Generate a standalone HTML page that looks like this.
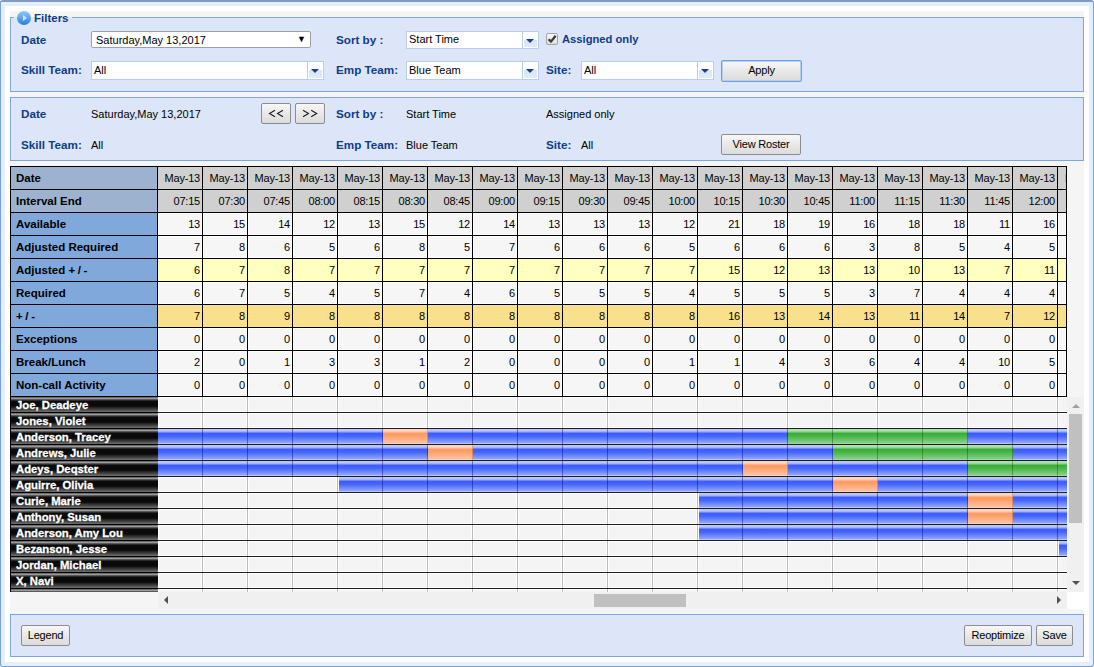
<!DOCTYPE html>
<html><head><meta charset="utf-8"><style>
*{box-sizing:border-box;margin:0;padding:0}
html,body{width:1094px;height:667px;overflow:hidden;background:#fff}
body{position:relative;font-family:"Liberation Sans",sans-serif;font-size:11px;color:#000}
.a{position:absolute}
.t{position:absolute;white-space:nowrap;line-height:12px}
.lb{font-weight:bold;color:#0f3c88;font-size:11.7px}
.combo{position:absolute;background:#fff;border:1px solid #b8cde6}
.combo .btn{position:absolute;right:0;top:0;bottom:0;width:16px;border-left:1px solid #b8cde6;background:linear-gradient(#fff 0,#fff 50%,#d6e5f8 50%,#e2ecfa 100%);box-shadow:inset 0 0 0 1px #fff}
.combo .btn:after{content:"";position:absolute;left:3px;top:6.5px;border-left:4px solid transparent;border-right:4px solid transparent;border-top:4.5px solid #1e3d8c}
.button{position:absolute;border:1px solid #8c8c8c;border-radius:2px;background:linear-gradient(#f8f8f8,#e8e8e8 50%,#dcdcdc);text-align:center;font-size:11px;color:#000;letter-spacing:-0.2px}
</style></head><body>

<div class="a" style="left:0;top:0;width:1094px;height:667px;border:1px solid #78a0d4;border-top-color:#8898b8;border-radius:3px;background:#e4eefc"></div>
<div class="a" style="left:0;top:1px;width:1094px;height:1px;background:#78a0d4"></div>
<div class="a" style="left:5px;top:6px;width:1084px;height:656px;background:#fff"></div>
<div class="a" style="left:10px;top:11px;width:1074px;height:646px;background:#f5f5f5"></div>
<div class="a" style="left:10px;top:17px;width:1074px;height:75px;border:1px solid #7ea6d8;background:#dce6f8"></div>
<div class="a" style="left:14px;top:17px;width:58px;height:1px;background:#dce6f8"></div>
<div class="a" style="left:17.3px;top:10.8px;width:14.2px;height:14px;border-radius:50%;background:linear-gradient(#94ccf8,#5aa6ec 50%,#2a7cd6)"></div>
<div class="a" style="left:23px;top:15px;width:0;height:0;border-top:3px solid transparent;border-bottom:3px solid transparent;border-left:4px solid rgba(225,235,250,0.85)"></div>
<div class="t lb" style="left:34px;top:12px;font-size:11.5px">Filters</div>
<div class="t lb" style="left:21px;top:34px">Date</div>
<div class="a" style="left:91px;top:31px;width:220px;height:17px;border:1px solid #a0a0a0;border-radius:2px;background:#fff"></div>
<div class="t" style="left:96px;top:34px">Saturday,May 13,2017</div>
<div class="t" style="left:297px;top:33px;font-size:9px">&#9660;</div>
<div class="t lb" style="left:21px;top:64px">Skill Team:</div>
<div class="combo" style="left:91px;top:61px;width:233px;height:19px"><div class="btn"></div></div>
<div class="t" style="left:94px;top:64px">All</div>
<div class="t lb" style="left:336px;top:34px">Sort by :</div>
<div class="combo" style="left:406px;top:31px;width:133px;height:18px"><div class="btn"></div></div>
<div class="t" style="left:409px;top:33px">Start Time</div>
<div class="t lb" style="left:336px;top:64px">Emp Team:</div>
<div class="combo" style="left:406px;top:61px;width:133px;height:19px"><div class="btn"></div></div>
<div class="t" style="left:409px;top:64px">Blue Team</div>
<div class="a" style="left:546px;top:33px;width:12px;height:12px;border:1px solid #a4a4a4;border-radius:2px;background:linear-gradient(#f6f6f6,#e0e0e0)"></div>
<svg class="a" style="left:546px;top:33px" width="12" height="12"><path d="M2.6 6.2 L5 8.6 L9.6 2.8" stroke="#3a3a3a" stroke-width="2.3" fill="none" stroke-linejoin="round"/></svg>
<div class="t lb" style="left:562px;top:33px;font-size:11.2px">Assigned only</div>
<div class="t lb" style="left:546px;top:64px">Site:</div>
<div class="combo" style="left:581px;top:61px;width:133px;height:19px"><div class="btn"></div></div>
<div class="t" style="left:584px;top:64px">All</div>
<div class="button" style="left:721px;top:60px;width:81px;height:22px;border-color:#6f9fdc;box-shadow:inset 0 0 0 1px #b4d0f0;line-height:19px">Apply</div>
<div class="a" style="left:10px;top:97px;width:1074px;height:64px;border:1px solid #7ea6d8;background:#dce6f8"></div>
<div class="t lb" style="left:21px;top:108px">Date</div>
<div class="t" style="left:91px;top:108px">Saturday,May 13,2017</div>
<div class="button" style="left:261px;top:103px;width:30px;height:21px"></div>
<div class="button" style="left:295px;top:103px;width:30px;height:21px"></div>
<svg class="a" style="left:261px;top:103px" width="64" height="21"><g stroke="#1a1a2a" stroke-width="1.1" fill="none"><path d="M14 7.3 L8.5 10.5 L14 13.7"/><path d="M22 7.3 L16.5 10.5 L22 13.7"/><path d="M42 7.3 L47.5 10.5 L42 13.7"/><path d="M50.2 7.3 L55.7 10.5 L50.2 13.7"/></g></svg>
<div class="t lb" style="left:336px;top:108px">Sort by :</div>
<div class="t" style="left:406px;top:108px">Start Time</div>
<div class="t" style="left:546px;top:108px">Assigned only</div>
<div class="t lb" style="left:21px;top:139px">Skill Team:</div>
<div class="t" style="left:91px;top:139px">All</div>
<div class="t lb" style="left:336px;top:139px">Emp Team:</div>
<div class="t" style="left:406px;top:139px">Blue Team</div>
<div class="t lb" style="left:546px;top:139px">Site:</div>
<div class="t" style="left:581px;top:139px">All</div>
<div class="button" style="left:721px;top:134px;width:80px;height:21px;line-height:19px">View Roster</div>
<div class="a" style="left:10px;top:166px;width:1057px;height:231px;background:#000"></div>
<div class="a" style="left:11px;top:167px;width:146px;height:22px;background:#9cb2ce"></div>
<div class="t" style="left:16px;top:172px;font-weight:bold;font-size:11.5px">Date</div>
<div class="a" style="left:158px;top:167px;width:44px;height:22px;background:#d0d0d0"></div>
<div class="t" style="left:158px;top:172px;width:44px;text-align:right;padding-right:2px;letter-spacing:-0.2px">May-13</div>
<div class="a" style="left:203px;top:167px;width:44px;height:22px;background:#d0d0d0"></div>
<div class="t" style="left:203px;top:172px;width:44px;text-align:right;padding-right:2px;letter-spacing:-0.2px">May-13</div>
<div class="a" style="left:248px;top:167px;width:44px;height:22px;background:#d0d0d0"></div>
<div class="t" style="left:248px;top:172px;width:44px;text-align:right;padding-right:2px;letter-spacing:-0.2px">May-13</div>
<div class="a" style="left:293px;top:167px;width:44px;height:22px;background:#d0d0d0"></div>
<div class="t" style="left:293px;top:172px;width:44px;text-align:right;padding-right:2px;letter-spacing:-0.2px">May-13</div>
<div class="a" style="left:338px;top:167px;width:44px;height:22px;background:#d0d0d0"></div>
<div class="t" style="left:338px;top:172px;width:44px;text-align:right;padding-right:2px;letter-spacing:-0.2px">May-13</div>
<div class="a" style="left:383px;top:167px;width:44px;height:22px;background:#d0d0d0"></div>
<div class="t" style="left:383px;top:172px;width:44px;text-align:right;padding-right:2px;letter-spacing:-0.2px">May-13</div>
<div class="a" style="left:428px;top:167px;width:44px;height:22px;background:#d0d0d0"></div>
<div class="t" style="left:428px;top:172px;width:44px;text-align:right;padding-right:2px;letter-spacing:-0.2px">May-13</div>
<div class="a" style="left:473px;top:167px;width:44px;height:22px;background:#d0d0d0"></div>
<div class="t" style="left:473px;top:172px;width:44px;text-align:right;padding-right:2px;letter-spacing:-0.2px">May-13</div>
<div class="a" style="left:518px;top:167px;width:44px;height:22px;background:#d0d0d0"></div>
<div class="t" style="left:518px;top:172px;width:44px;text-align:right;padding-right:2px;letter-spacing:-0.2px">May-13</div>
<div class="a" style="left:563px;top:167px;width:44px;height:22px;background:#d0d0d0"></div>
<div class="t" style="left:563px;top:172px;width:44px;text-align:right;padding-right:2px;letter-spacing:-0.2px">May-13</div>
<div class="a" style="left:608px;top:167px;width:44px;height:22px;background:#d0d0d0"></div>
<div class="t" style="left:608px;top:172px;width:44px;text-align:right;padding-right:2px;letter-spacing:-0.2px">May-13</div>
<div class="a" style="left:653px;top:167px;width:44px;height:22px;background:#d0d0d0"></div>
<div class="t" style="left:653px;top:172px;width:44px;text-align:right;padding-right:2px;letter-spacing:-0.2px">May-13</div>
<div class="a" style="left:698px;top:167px;width:44px;height:22px;background:#d0d0d0"></div>
<div class="t" style="left:698px;top:172px;width:44px;text-align:right;padding-right:2px;letter-spacing:-0.2px">May-13</div>
<div class="a" style="left:743px;top:167px;width:44px;height:22px;background:#d0d0d0"></div>
<div class="t" style="left:743px;top:172px;width:44px;text-align:right;padding-right:2px;letter-spacing:-0.2px">May-13</div>
<div class="a" style="left:788px;top:167px;width:44px;height:22px;background:#d0d0d0"></div>
<div class="t" style="left:788px;top:172px;width:44px;text-align:right;padding-right:2px;letter-spacing:-0.2px">May-13</div>
<div class="a" style="left:833px;top:167px;width:44px;height:22px;background:#d0d0d0"></div>
<div class="t" style="left:833px;top:172px;width:44px;text-align:right;padding-right:2px;letter-spacing:-0.2px">May-13</div>
<div class="a" style="left:878px;top:167px;width:44px;height:22px;background:#d0d0d0"></div>
<div class="t" style="left:878px;top:172px;width:44px;text-align:right;padding-right:2px;letter-spacing:-0.2px">May-13</div>
<div class="a" style="left:923px;top:167px;width:44px;height:22px;background:#d0d0d0"></div>
<div class="t" style="left:923px;top:172px;width:44px;text-align:right;padding-right:2px;letter-spacing:-0.2px">May-13</div>
<div class="a" style="left:968px;top:167px;width:44px;height:22px;background:#d0d0d0"></div>
<div class="t" style="left:968px;top:172px;width:44px;text-align:right;padding-right:2px;letter-spacing:-0.2px">May-13</div>
<div class="a" style="left:1013px;top:167px;width:44px;height:22px;background:#d0d0d0"></div>
<div class="t" style="left:1013px;top:172px;width:44px;text-align:right;padding-right:2px;letter-spacing:-0.2px">May-13</div>
<div class="a" style="left:1058px;top:167px;width:8px;height:22px;background:#d0d0d0"></div>
<div class="a" style="left:1058px;top:167px;width:8px;height:22px;overflow:hidden"><div class="t" style="left:7px;top:5px">May-13</div></div>
<div class="a" style="left:11px;top:190px;width:146px;height:22px;background:#9cb2ce"></div>
<div class="t" style="left:16px;top:195px;font-weight:bold;font-size:11.5px">Interval End</div>
<div class="a" style="left:158px;top:190px;width:44px;height:22px;background:#d0d0d0"></div>
<div class="t" style="left:158px;top:195px;width:44px;text-align:right;padding-right:2px;letter-spacing:-0.2px">07:15</div>
<div class="a" style="left:203px;top:190px;width:44px;height:22px;background:#d0d0d0"></div>
<div class="t" style="left:203px;top:195px;width:44px;text-align:right;padding-right:2px;letter-spacing:-0.2px">07:30</div>
<div class="a" style="left:248px;top:190px;width:44px;height:22px;background:#d0d0d0"></div>
<div class="t" style="left:248px;top:195px;width:44px;text-align:right;padding-right:2px;letter-spacing:-0.2px">07:45</div>
<div class="a" style="left:293px;top:190px;width:44px;height:22px;background:#d0d0d0"></div>
<div class="t" style="left:293px;top:195px;width:44px;text-align:right;padding-right:2px;letter-spacing:-0.2px">08:00</div>
<div class="a" style="left:338px;top:190px;width:44px;height:22px;background:#d0d0d0"></div>
<div class="t" style="left:338px;top:195px;width:44px;text-align:right;padding-right:2px;letter-spacing:-0.2px">08:15</div>
<div class="a" style="left:383px;top:190px;width:44px;height:22px;background:#d0d0d0"></div>
<div class="t" style="left:383px;top:195px;width:44px;text-align:right;padding-right:2px;letter-spacing:-0.2px">08:30</div>
<div class="a" style="left:428px;top:190px;width:44px;height:22px;background:#d0d0d0"></div>
<div class="t" style="left:428px;top:195px;width:44px;text-align:right;padding-right:2px;letter-spacing:-0.2px">08:45</div>
<div class="a" style="left:473px;top:190px;width:44px;height:22px;background:#d0d0d0"></div>
<div class="t" style="left:473px;top:195px;width:44px;text-align:right;padding-right:2px;letter-spacing:-0.2px">09:00</div>
<div class="a" style="left:518px;top:190px;width:44px;height:22px;background:#d0d0d0"></div>
<div class="t" style="left:518px;top:195px;width:44px;text-align:right;padding-right:2px;letter-spacing:-0.2px">09:15</div>
<div class="a" style="left:563px;top:190px;width:44px;height:22px;background:#d0d0d0"></div>
<div class="t" style="left:563px;top:195px;width:44px;text-align:right;padding-right:2px;letter-spacing:-0.2px">09:30</div>
<div class="a" style="left:608px;top:190px;width:44px;height:22px;background:#d0d0d0"></div>
<div class="t" style="left:608px;top:195px;width:44px;text-align:right;padding-right:2px;letter-spacing:-0.2px">09:45</div>
<div class="a" style="left:653px;top:190px;width:44px;height:22px;background:#d0d0d0"></div>
<div class="t" style="left:653px;top:195px;width:44px;text-align:right;padding-right:2px;letter-spacing:-0.2px">10:00</div>
<div class="a" style="left:698px;top:190px;width:44px;height:22px;background:#d0d0d0"></div>
<div class="t" style="left:698px;top:195px;width:44px;text-align:right;padding-right:2px;letter-spacing:-0.2px">10:15</div>
<div class="a" style="left:743px;top:190px;width:44px;height:22px;background:#d0d0d0"></div>
<div class="t" style="left:743px;top:195px;width:44px;text-align:right;padding-right:2px;letter-spacing:-0.2px">10:30</div>
<div class="a" style="left:788px;top:190px;width:44px;height:22px;background:#d0d0d0"></div>
<div class="t" style="left:788px;top:195px;width:44px;text-align:right;padding-right:2px;letter-spacing:-0.2px">10:45</div>
<div class="a" style="left:833px;top:190px;width:44px;height:22px;background:#d0d0d0"></div>
<div class="t" style="left:833px;top:195px;width:44px;text-align:right;padding-right:2px;letter-spacing:-0.2px">11:00</div>
<div class="a" style="left:878px;top:190px;width:44px;height:22px;background:#d0d0d0"></div>
<div class="t" style="left:878px;top:195px;width:44px;text-align:right;padding-right:2px;letter-spacing:-0.2px">11:15</div>
<div class="a" style="left:923px;top:190px;width:44px;height:22px;background:#d0d0d0"></div>
<div class="t" style="left:923px;top:195px;width:44px;text-align:right;padding-right:2px;letter-spacing:-0.2px">11:30</div>
<div class="a" style="left:968px;top:190px;width:44px;height:22px;background:#d0d0d0"></div>
<div class="t" style="left:968px;top:195px;width:44px;text-align:right;padding-right:2px;letter-spacing:-0.2px">11:45</div>
<div class="a" style="left:1013px;top:190px;width:44px;height:22px;background:#d0d0d0"></div>
<div class="t" style="left:1013px;top:195px;width:44px;text-align:right;padding-right:2px;letter-spacing:-0.2px">12:00</div>
<div class="a" style="left:1058px;top:190px;width:8px;height:22px;background:#d0d0d0"></div>
<div class="a" style="left:11px;top:213px;width:146px;height:22px;background:#80a8da"></div>
<div class="t" style="left:16px;top:218px;font-weight:bold;font-size:11.5px">Available</div>
<div class="a" style="left:158px;top:213px;width:44px;height:22px;background:#f6f6f6;border:1px solid #fff"></div>
<div class="t" style="left:158px;top:218px;width:44px;text-align:right;padding-right:2px;letter-spacing:-0.2px">13</div>
<div class="a" style="left:203px;top:213px;width:44px;height:22px;background:#f6f6f6;border:1px solid #fff"></div>
<div class="t" style="left:203px;top:218px;width:44px;text-align:right;padding-right:2px;letter-spacing:-0.2px">15</div>
<div class="a" style="left:248px;top:213px;width:44px;height:22px;background:#f6f6f6;border:1px solid #fff"></div>
<div class="t" style="left:248px;top:218px;width:44px;text-align:right;padding-right:2px;letter-spacing:-0.2px">14</div>
<div class="a" style="left:293px;top:213px;width:44px;height:22px;background:#f6f6f6;border:1px solid #fff"></div>
<div class="t" style="left:293px;top:218px;width:44px;text-align:right;padding-right:2px;letter-spacing:-0.2px">12</div>
<div class="a" style="left:338px;top:213px;width:44px;height:22px;background:#f6f6f6;border:1px solid #fff"></div>
<div class="t" style="left:338px;top:218px;width:44px;text-align:right;padding-right:2px;letter-spacing:-0.2px">13</div>
<div class="a" style="left:383px;top:213px;width:44px;height:22px;background:#f6f6f6;border:1px solid #fff"></div>
<div class="t" style="left:383px;top:218px;width:44px;text-align:right;padding-right:2px;letter-spacing:-0.2px">15</div>
<div class="a" style="left:428px;top:213px;width:44px;height:22px;background:#f6f6f6;border:1px solid #fff"></div>
<div class="t" style="left:428px;top:218px;width:44px;text-align:right;padding-right:2px;letter-spacing:-0.2px">12</div>
<div class="a" style="left:473px;top:213px;width:44px;height:22px;background:#f6f6f6;border:1px solid #fff"></div>
<div class="t" style="left:473px;top:218px;width:44px;text-align:right;padding-right:2px;letter-spacing:-0.2px">14</div>
<div class="a" style="left:518px;top:213px;width:44px;height:22px;background:#f6f6f6;border:1px solid #fff"></div>
<div class="t" style="left:518px;top:218px;width:44px;text-align:right;padding-right:2px;letter-spacing:-0.2px">13</div>
<div class="a" style="left:563px;top:213px;width:44px;height:22px;background:#f6f6f6;border:1px solid #fff"></div>
<div class="t" style="left:563px;top:218px;width:44px;text-align:right;padding-right:2px;letter-spacing:-0.2px">13</div>
<div class="a" style="left:608px;top:213px;width:44px;height:22px;background:#f6f6f6;border:1px solid #fff"></div>
<div class="t" style="left:608px;top:218px;width:44px;text-align:right;padding-right:2px;letter-spacing:-0.2px">13</div>
<div class="a" style="left:653px;top:213px;width:44px;height:22px;background:#f6f6f6;border:1px solid #fff"></div>
<div class="t" style="left:653px;top:218px;width:44px;text-align:right;padding-right:2px;letter-spacing:-0.2px">12</div>
<div class="a" style="left:698px;top:213px;width:44px;height:22px;background:#f6f6f6;border:1px solid #fff"></div>
<div class="t" style="left:698px;top:218px;width:44px;text-align:right;padding-right:2px;letter-spacing:-0.2px">21</div>
<div class="a" style="left:743px;top:213px;width:44px;height:22px;background:#f6f6f6;border:1px solid #fff"></div>
<div class="t" style="left:743px;top:218px;width:44px;text-align:right;padding-right:2px;letter-spacing:-0.2px">18</div>
<div class="a" style="left:788px;top:213px;width:44px;height:22px;background:#f6f6f6;border:1px solid #fff"></div>
<div class="t" style="left:788px;top:218px;width:44px;text-align:right;padding-right:2px;letter-spacing:-0.2px">19</div>
<div class="a" style="left:833px;top:213px;width:44px;height:22px;background:#f6f6f6;border:1px solid #fff"></div>
<div class="t" style="left:833px;top:218px;width:44px;text-align:right;padding-right:2px;letter-spacing:-0.2px">16</div>
<div class="a" style="left:878px;top:213px;width:44px;height:22px;background:#f6f6f6;border:1px solid #fff"></div>
<div class="t" style="left:878px;top:218px;width:44px;text-align:right;padding-right:2px;letter-spacing:-0.2px">18</div>
<div class="a" style="left:923px;top:213px;width:44px;height:22px;background:#f6f6f6;border:1px solid #fff"></div>
<div class="t" style="left:923px;top:218px;width:44px;text-align:right;padding-right:2px;letter-spacing:-0.2px">18</div>
<div class="a" style="left:968px;top:213px;width:44px;height:22px;background:#f6f6f6;border:1px solid #fff"></div>
<div class="t" style="left:968px;top:218px;width:44px;text-align:right;padding-right:2px;letter-spacing:-0.2px">11</div>
<div class="a" style="left:1013px;top:213px;width:44px;height:22px;background:#f6f6f6;border:1px solid #fff"></div>
<div class="t" style="left:1013px;top:218px;width:44px;text-align:right;padding-right:2px;letter-spacing:-0.2px">16</div>
<div class="a" style="left:1058px;top:213px;width:8px;height:22px;background:#f6f6f6;border:1px solid #fff"></div>
<div class="a" style="left:11px;top:236px;width:146px;height:22px;background:#80a8da"></div>
<div class="t" style="left:16px;top:241px;font-weight:bold;font-size:11.5px">Adjusted Required</div>
<div class="a" style="left:158px;top:236px;width:44px;height:22px;background:#f6f6f6;border:1px solid #fff"></div>
<div class="t" style="left:158px;top:241px;width:44px;text-align:right;padding-right:2px;letter-spacing:-0.2px">7</div>
<div class="a" style="left:203px;top:236px;width:44px;height:22px;background:#f6f6f6;border:1px solid #fff"></div>
<div class="t" style="left:203px;top:241px;width:44px;text-align:right;padding-right:2px;letter-spacing:-0.2px">8</div>
<div class="a" style="left:248px;top:236px;width:44px;height:22px;background:#f6f6f6;border:1px solid #fff"></div>
<div class="t" style="left:248px;top:241px;width:44px;text-align:right;padding-right:2px;letter-spacing:-0.2px">6</div>
<div class="a" style="left:293px;top:236px;width:44px;height:22px;background:#f6f6f6;border:1px solid #fff"></div>
<div class="t" style="left:293px;top:241px;width:44px;text-align:right;padding-right:2px;letter-spacing:-0.2px">5</div>
<div class="a" style="left:338px;top:236px;width:44px;height:22px;background:#f6f6f6;border:1px solid #fff"></div>
<div class="t" style="left:338px;top:241px;width:44px;text-align:right;padding-right:2px;letter-spacing:-0.2px">6</div>
<div class="a" style="left:383px;top:236px;width:44px;height:22px;background:#f6f6f6;border:1px solid #fff"></div>
<div class="t" style="left:383px;top:241px;width:44px;text-align:right;padding-right:2px;letter-spacing:-0.2px">8</div>
<div class="a" style="left:428px;top:236px;width:44px;height:22px;background:#f6f6f6;border:1px solid #fff"></div>
<div class="t" style="left:428px;top:241px;width:44px;text-align:right;padding-right:2px;letter-spacing:-0.2px">5</div>
<div class="a" style="left:473px;top:236px;width:44px;height:22px;background:#f6f6f6;border:1px solid #fff"></div>
<div class="t" style="left:473px;top:241px;width:44px;text-align:right;padding-right:2px;letter-spacing:-0.2px">7</div>
<div class="a" style="left:518px;top:236px;width:44px;height:22px;background:#f6f6f6;border:1px solid #fff"></div>
<div class="t" style="left:518px;top:241px;width:44px;text-align:right;padding-right:2px;letter-spacing:-0.2px">6</div>
<div class="a" style="left:563px;top:236px;width:44px;height:22px;background:#f6f6f6;border:1px solid #fff"></div>
<div class="t" style="left:563px;top:241px;width:44px;text-align:right;padding-right:2px;letter-spacing:-0.2px">6</div>
<div class="a" style="left:608px;top:236px;width:44px;height:22px;background:#f6f6f6;border:1px solid #fff"></div>
<div class="t" style="left:608px;top:241px;width:44px;text-align:right;padding-right:2px;letter-spacing:-0.2px">6</div>
<div class="a" style="left:653px;top:236px;width:44px;height:22px;background:#f6f6f6;border:1px solid #fff"></div>
<div class="t" style="left:653px;top:241px;width:44px;text-align:right;padding-right:2px;letter-spacing:-0.2px">5</div>
<div class="a" style="left:698px;top:236px;width:44px;height:22px;background:#f6f6f6;border:1px solid #fff"></div>
<div class="t" style="left:698px;top:241px;width:44px;text-align:right;padding-right:2px;letter-spacing:-0.2px">6</div>
<div class="a" style="left:743px;top:236px;width:44px;height:22px;background:#f6f6f6;border:1px solid #fff"></div>
<div class="t" style="left:743px;top:241px;width:44px;text-align:right;padding-right:2px;letter-spacing:-0.2px">6</div>
<div class="a" style="left:788px;top:236px;width:44px;height:22px;background:#f6f6f6;border:1px solid #fff"></div>
<div class="t" style="left:788px;top:241px;width:44px;text-align:right;padding-right:2px;letter-spacing:-0.2px">6</div>
<div class="a" style="left:833px;top:236px;width:44px;height:22px;background:#f6f6f6;border:1px solid #fff"></div>
<div class="t" style="left:833px;top:241px;width:44px;text-align:right;padding-right:2px;letter-spacing:-0.2px">3</div>
<div class="a" style="left:878px;top:236px;width:44px;height:22px;background:#f6f6f6;border:1px solid #fff"></div>
<div class="t" style="left:878px;top:241px;width:44px;text-align:right;padding-right:2px;letter-spacing:-0.2px">8</div>
<div class="a" style="left:923px;top:236px;width:44px;height:22px;background:#f6f6f6;border:1px solid #fff"></div>
<div class="t" style="left:923px;top:241px;width:44px;text-align:right;padding-right:2px;letter-spacing:-0.2px">5</div>
<div class="a" style="left:968px;top:236px;width:44px;height:22px;background:#f6f6f6;border:1px solid #fff"></div>
<div class="t" style="left:968px;top:241px;width:44px;text-align:right;padding-right:2px;letter-spacing:-0.2px">4</div>
<div class="a" style="left:1013px;top:236px;width:44px;height:22px;background:#f6f6f6;border:1px solid #fff"></div>
<div class="t" style="left:1013px;top:241px;width:44px;text-align:right;padding-right:2px;letter-spacing:-0.2px">5</div>
<div class="a" style="left:1058px;top:236px;width:8px;height:22px;background:#f6f6f6;border:1px solid #fff"></div>
<div class="a" style="left:11px;top:259px;width:146px;height:22px;background:#80a8da"></div>
<div class="t" style="left:16px;top:264px;font-weight:bold;font-size:11.5px">Adjusted <span style="letter-spacing:2.6px">+/</span>-</div>
<div class="a" style="left:158px;top:259px;width:44px;height:22px;background:#ffffc0"></div>
<div class="t" style="left:158px;top:264px;width:44px;text-align:right;padding-right:2px;letter-spacing:-0.2px">6</div>
<div class="a" style="left:203px;top:259px;width:44px;height:22px;background:#ffffc0"></div>
<div class="t" style="left:203px;top:264px;width:44px;text-align:right;padding-right:2px;letter-spacing:-0.2px">7</div>
<div class="a" style="left:248px;top:259px;width:44px;height:22px;background:#ffffc0"></div>
<div class="t" style="left:248px;top:264px;width:44px;text-align:right;padding-right:2px;letter-spacing:-0.2px">8</div>
<div class="a" style="left:293px;top:259px;width:44px;height:22px;background:#ffffc0"></div>
<div class="t" style="left:293px;top:264px;width:44px;text-align:right;padding-right:2px;letter-spacing:-0.2px">7</div>
<div class="a" style="left:338px;top:259px;width:44px;height:22px;background:#ffffc0"></div>
<div class="t" style="left:338px;top:264px;width:44px;text-align:right;padding-right:2px;letter-spacing:-0.2px">7</div>
<div class="a" style="left:383px;top:259px;width:44px;height:22px;background:#ffffc0"></div>
<div class="t" style="left:383px;top:264px;width:44px;text-align:right;padding-right:2px;letter-spacing:-0.2px">7</div>
<div class="a" style="left:428px;top:259px;width:44px;height:22px;background:#ffffc0"></div>
<div class="t" style="left:428px;top:264px;width:44px;text-align:right;padding-right:2px;letter-spacing:-0.2px">7</div>
<div class="a" style="left:473px;top:259px;width:44px;height:22px;background:#ffffc0"></div>
<div class="t" style="left:473px;top:264px;width:44px;text-align:right;padding-right:2px;letter-spacing:-0.2px">7</div>
<div class="a" style="left:518px;top:259px;width:44px;height:22px;background:#ffffc0"></div>
<div class="t" style="left:518px;top:264px;width:44px;text-align:right;padding-right:2px;letter-spacing:-0.2px">7</div>
<div class="a" style="left:563px;top:259px;width:44px;height:22px;background:#ffffc0"></div>
<div class="t" style="left:563px;top:264px;width:44px;text-align:right;padding-right:2px;letter-spacing:-0.2px">7</div>
<div class="a" style="left:608px;top:259px;width:44px;height:22px;background:#ffffc0"></div>
<div class="t" style="left:608px;top:264px;width:44px;text-align:right;padding-right:2px;letter-spacing:-0.2px">7</div>
<div class="a" style="left:653px;top:259px;width:44px;height:22px;background:#ffffc0"></div>
<div class="t" style="left:653px;top:264px;width:44px;text-align:right;padding-right:2px;letter-spacing:-0.2px">7</div>
<div class="a" style="left:698px;top:259px;width:44px;height:22px;background:#ffffc0"></div>
<div class="t" style="left:698px;top:264px;width:44px;text-align:right;padding-right:2px;letter-spacing:-0.2px">15</div>
<div class="a" style="left:743px;top:259px;width:44px;height:22px;background:#ffffc0"></div>
<div class="t" style="left:743px;top:264px;width:44px;text-align:right;padding-right:2px;letter-spacing:-0.2px">12</div>
<div class="a" style="left:788px;top:259px;width:44px;height:22px;background:#ffffc0"></div>
<div class="t" style="left:788px;top:264px;width:44px;text-align:right;padding-right:2px;letter-spacing:-0.2px">13</div>
<div class="a" style="left:833px;top:259px;width:44px;height:22px;background:#ffffc0"></div>
<div class="t" style="left:833px;top:264px;width:44px;text-align:right;padding-right:2px;letter-spacing:-0.2px">13</div>
<div class="a" style="left:878px;top:259px;width:44px;height:22px;background:#ffffc0"></div>
<div class="t" style="left:878px;top:264px;width:44px;text-align:right;padding-right:2px;letter-spacing:-0.2px">10</div>
<div class="a" style="left:923px;top:259px;width:44px;height:22px;background:#ffffc0"></div>
<div class="t" style="left:923px;top:264px;width:44px;text-align:right;padding-right:2px;letter-spacing:-0.2px">13</div>
<div class="a" style="left:968px;top:259px;width:44px;height:22px;background:#ffffc0"></div>
<div class="t" style="left:968px;top:264px;width:44px;text-align:right;padding-right:2px;letter-spacing:-0.2px">7</div>
<div class="a" style="left:1013px;top:259px;width:44px;height:22px;background:#ffffc0"></div>
<div class="t" style="left:1013px;top:264px;width:44px;text-align:right;padding-right:2px;letter-spacing:-0.2px">11</div>
<div class="a" style="left:1058px;top:259px;width:8px;height:22px;background:#ffffc0"></div>
<div class="a" style="left:11px;top:282px;width:146px;height:22px;background:#80a8da"></div>
<div class="t" style="left:16px;top:287px;font-weight:bold;font-size:11.5px">Required</div>
<div class="a" style="left:158px;top:282px;width:44px;height:22px;background:#f6f6f6;border:1px solid #fff"></div>
<div class="t" style="left:158px;top:287px;width:44px;text-align:right;padding-right:2px;letter-spacing:-0.2px">6</div>
<div class="a" style="left:203px;top:282px;width:44px;height:22px;background:#f6f6f6;border:1px solid #fff"></div>
<div class="t" style="left:203px;top:287px;width:44px;text-align:right;padding-right:2px;letter-spacing:-0.2px">7</div>
<div class="a" style="left:248px;top:282px;width:44px;height:22px;background:#f6f6f6;border:1px solid #fff"></div>
<div class="t" style="left:248px;top:287px;width:44px;text-align:right;padding-right:2px;letter-spacing:-0.2px">5</div>
<div class="a" style="left:293px;top:282px;width:44px;height:22px;background:#f6f6f6;border:1px solid #fff"></div>
<div class="t" style="left:293px;top:287px;width:44px;text-align:right;padding-right:2px;letter-spacing:-0.2px">4</div>
<div class="a" style="left:338px;top:282px;width:44px;height:22px;background:#f6f6f6;border:1px solid #fff"></div>
<div class="t" style="left:338px;top:287px;width:44px;text-align:right;padding-right:2px;letter-spacing:-0.2px">5</div>
<div class="a" style="left:383px;top:282px;width:44px;height:22px;background:#f6f6f6;border:1px solid #fff"></div>
<div class="t" style="left:383px;top:287px;width:44px;text-align:right;padding-right:2px;letter-spacing:-0.2px">7</div>
<div class="a" style="left:428px;top:282px;width:44px;height:22px;background:#f6f6f6;border:1px solid #fff"></div>
<div class="t" style="left:428px;top:287px;width:44px;text-align:right;padding-right:2px;letter-spacing:-0.2px">4</div>
<div class="a" style="left:473px;top:282px;width:44px;height:22px;background:#f6f6f6;border:1px solid #fff"></div>
<div class="t" style="left:473px;top:287px;width:44px;text-align:right;padding-right:2px;letter-spacing:-0.2px">6</div>
<div class="a" style="left:518px;top:282px;width:44px;height:22px;background:#f6f6f6;border:1px solid #fff"></div>
<div class="t" style="left:518px;top:287px;width:44px;text-align:right;padding-right:2px;letter-spacing:-0.2px">5</div>
<div class="a" style="left:563px;top:282px;width:44px;height:22px;background:#f6f6f6;border:1px solid #fff"></div>
<div class="t" style="left:563px;top:287px;width:44px;text-align:right;padding-right:2px;letter-spacing:-0.2px">5</div>
<div class="a" style="left:608px;top:282px;width:44px;height:22px;background:#f6f6f6;border:1px solid #fff"></div>
<div class="t" style="left:608px;top:287px;width:44px;text-align:right;padding-right:2px;letter-spacing:-0.2px">5</div>
<div class="a" style="left:653px;top:282px;width:44px;height:22px;background:#f6f6f6;border:1px solid #fff"></div>
<div class="t" style="left:653px;top:287px;width:44px;text-align:right;padding-right:2px;letter-spacing:-0.2px">4</div>
<div class="a" style="left:698px;top:282px;width:44px;height:22px;background:#f6f6f6;border:1px solid #fff"></div>
<div class="t" style="left:698px;top:287px;width:44px;text-align:right;padding-right:2px;letter-spacing:-0.2px">5</div>
<div class="a" style="left:743px;top:282px;width:44px;height:22px;background:#f6f6f6;border:1px solid #fff"></div>
<div class="t" style="left:743px;top:287px;width:44px;text-align:right;padding-right:2px;letter-spacing:-0.2px">5</div>
<div class="a" style="left:788px;top:282px;width:44px;height:22px;background:#f6f6f6;border:1px solid #fff"></div>
<div class="t" style="left:788px;top:287px;width:44px;text-align:right;padding-right:2px;letter-spacing:-0.2px">5</div>
<div class="a" style="left:833px;top:282px;width:44px;height:22px;background:#f6f6f6;border:1px solid #fff"></div>
<div class="t" style="left:833px;top:287px;width:44px;text-align:right;padding-right:2px;letter-spacing:-0.2px">3</div>
<div class="a" style="left:878px;top:282px;width:44px;height:22px;background:#f6f6f6;border:1px solid #fff"></div>
<div class="t" style="left:878px;top:287px;width:44px;text-align:right;padding-right:2px;letter-spacing:-0.2px">7</div>
<div class="a" style="left:923px;top:282px;width:44px;height:22px;background:#f6f6f6;border:1px solid #fff"></div>
<div class="t" style="left:923px;top:287px;width:44px;text-align:right;padding-right:2px;letter-spacing:-0.2px">4</div>
<div class="a" style="left:968px;top:282px;width:44px;height:22px;background:#f6f6f6;border:1px solid #fff"></div>
<div class="t" style="left:968px;top:287px;width:44px;text-align:right;padding-right:2px;letter-spacing:-0.2px">4</div>
<div class="a" style="left:1013px;top:282px;width:44px;height:22px;background:#f6f6f6;border:1px solid #fff"></div>
<div class="t" style="left:1013px;top:287px;width:44px;text-align:right;padding-right:2px;letter-spacing:-0.2px">4</div>
<div class="a" style="left:1058px;top:282px;width:8px;height:22px;background:#f6f6f6;border:1px solid #fff"></div>
<div class="a" style="left:11px;top:305px;width:146px;height:22px;background:#80a8da"></div>
<div class="t" style="left:16px;top:310px;font-weight:bold;font-size:11.5px"><span style="letter-spacing:2.6px">+/</span>-</div>
<div class="a" style="left:158px;top:305px;width:44px;height:22px;background:#f8e08c"></div>
<div class="t" style="left:158px;top:310px;width:44px;text-align:right;padding-right:2px;letter-spacing:-0.2px">7</div>
<div class="a" style="left:203px;top:305px;width:44px;height:22px;background:#f8e08c"></div>
<div class="t" style="left:203px;top:310px;width:44px;text-align:right;padding-right:2px;letter-spacing:-0.2px">8</div>
<div class="a" style="left:248px;top:305px;width:44px;height:22px;background:#f8e08c"></div>
<div class="t" style="left:248px;top:310px;width:44px;text-align:right;padding-right:2px;letter-spacing:-0.2px">9</div>
<div class="a" style="left:293px;top:305px;width:44px;height:22px;background:#f8e08c"></div>
<div class="t" style="left:293px;top:310px;width:44px;text-align:right;padding-right:2px;letter-spacing:-0.2px">8</div>
<div class="a" style="left:338px;top:305px;width:44px;height:22px;background:#f8e08c"></div>
<div class="t" style="left:338px;top:310px;width:44px;text-align:right;padding-right:2px;letter-spacing:-0.2px">8</div>
<div class="a" style="left:383px;top:305px;width:44px;height:22px;background:#f8e08c"></div>
<div class="t" style="left:383px;top:310px;width:44px;text-align:right;padding-right:2px;letter-spacing:-0.2px">8</div>
<div class="a" style="left:428px;top:305px;width:44px;height:22px;background:#f8e08c"></div>
<div class="t" style="left:428px;top:310px;width:44px;text-align:right;padding-right:2px;letter-spacing:-0.2px">8</div>
<div class="a" style="left:473px;top:305px;width:44px;height:22px;background:#f8e08c"></div>
<div class="t" style="left:473px;top:310px;width:44px;text-align:right;padding-right:2px;letter-spacing:-0.2px">8</div>
<div class="a" style="left:518px;top:305px;width:44px;height:22px;background:#f8e08c"></div>
<div class="t" style="left:518px;top:310px;width:44px;text-align:right;padding-right:2px;letter-spacing:-0.2px">8</div>
<div class="a" style="left:563px;top:305px;width:44px;height:22px;background:#f8e08c"></div>
<div class="t" style="left:563px;top:310px;width:44px;text-align:right;padding-right:2px;letter-spacing:-0.2px">8</div>
<div class="a" style="left:608px;top:305px;width:44px;height:22px;background:#f8e08c"></div>
<div class="t" style="left:608px;top:310px;width:44px;text-align:right;padding-right:2px;letter-spacing:-0.2px">8</div>
<div class="a" style="left:653px;top:305px;width:44px;height:22px;background:#f8e08c"></div>
<div class="t" style="left:653px;top:310px;width:44px;text-align:right;padding-right:2px;letter-spacing:-0.2px">8</div>
<div class="a" style="left:698px;top:305px;width:44px;height:22px;background:#f8e08c"></div>
<div class="t" style="left:698px;top:310px;width:44px;text-align:right;padding-right:2px;letter-spacing:-0.2px">16</div>
<div class="a" style="left:743px;top:305px;width:44px;height:22px;background:#f8e08c"></div>
<div class="t" style="left:743px;top:310px;width:44px;text-align:right;padding-right:2px;letter-spacing:-0.2px">13</div>
<div class="a" style="left:788px;top:305px;width:44px;height:22px;background:#f8e08c"></div>
<div class="t" style="left:788px;top:310px;width:44px;text-align:right;padding-right:2px;letter-spacing:-0.2px">14</div>
<div class="a" style="left:833px;top:305px;width:44px;height:22px;background:#f8e08c"></div>
<div class="t" style="left:833px;top:310px;width:44px;text-align:right;padding-right:2px;letter-spacing:-0.2px">13</div>
<div class="a" style="left:878px;top:305px;width:44px;height:22px;background:#f8e08c"></div>
<div class="t" style="left:878px;top:310px;width:44px;text-align:right;padding-right:2px;letter-spacing:-0.2px">11</div>
<div class="a" style="left:923px;top:305px;width:44px;height:22px;background:#f8e08c"></div>
<div class="t" style="left:923px;top:310px;width:44px;text-align:right;padding-right:2px;letter-spacing:-0.2px">14</div>
<div class="a" style="left:968px;top:305px;width:44px;height:22px;background:#f8e08c"></div>
<div class="t" style="left:968px;top:310px;width:44px;text-align:right;padding-right:2px;letter-spacing:-0.2px">7</div>
<div class="a" style="left:1013px;top:305px;width:44px;height:22px;background:#f8e08c"></div>
<div class="t" style="left:1013px;top:310px;width:44px;text-align:right;padding-right:2px;letter-spacing:-0.2px">12</div>
<div class="a" style="left:1058px;top:305px;width:8px;height:22px;background:#f8e08c"></div>
<div class="a" style="left:11px;top:328px;width:146px;height:22px;background:#80a8da"></div>
<div class="t" style="left:16px;top:333px;font-weight:bold;font-size:11.5px">Exceptions</div>
<div class="a" style="left:158px;top:328px;width:44px;height:22px;background:#f6f6f6;border:1px solid #fff"></div>
<div class="t" style="left:158px;top:333px;width:44px;text-align:right;padding-right:2px;letter-spacing:-0.2px">0</div>
<div class="a" style="left:203px;top:328px;width:44px;height:22px;background:#f6f6f6;border:1px solid #fff"></div>
<div class="t" style="left:203px;top:333px;width:44px;text-align:right;padding-right:2px;letter-spacing:-0.2px">0</div>
<div class="a" style="left:248px;top:328px;width:44px;height:22px;background:#f6f6f6;border:1px solid #fff"></div>
<div class="t" style="left:248px;top:333px;width:44px;text-align:right;padding-right:2px;letter-spacing:-0.2px">0</div>
<div class="a" style="left:293px;top:328px;width:44px;height:22px;background:#f6f6f6;border:1px solid #fff"></div>
<div class="t" style="left:293px;top:333px;width:44px;text-align:right;padding-right:2px;letter-spacing:-0.2px">0</div>
<div class="a" style="left:338px;top:328px;width:44px;height:22px;background:#f6f6f6;border:1px solid #fff"></div>
<div class="t" style="left:338px;top:333px;width:44px;text-align:right;padding-right:2px;letter-spacing:-0.2px">0</div>
<div class="a" style="left:383px;top:328px;width:44px;height:22px;background:#f6f6f6;border:1px solid #fff"></div>
<div class="t" style="left:383px;top:333px;width:44px;text-align:right;padding-right:2px;letter-spacing:-0.2px">0</div>
<div class="a" style="left:428px;top:328px;width:44px;height:22px;background:#f6f6f6;border:1px solid #fff"></div>
<div class="t" style="left:428px;top:333px;width:44px;text-align:right;padding-right:2px;letter-spacing:-0.2px">0</div>
<div class="a" style="left:473px;top:328px;width:44px;height:22px;background:#f6f6f6;border:1px solid #fff"></div>
<div class="t" style="left:473px;top:333px;width:44px;text-align:right;padding-right:2px;letter-spacing:-0.2px">0</div>
<div class="a" style="left:518px;top:328px;width:44px;height:22px;background:#f6f6f6;border:1px solid #fff"></div>
<div class="t" style="left:518px;top:333px;width:44px;text-align:right;padding-right:2px;letter-spacing:-0.2px">0</div>
<div class="a" style="left:563px;top:328px;width:44px;height:22px;background:#f6f6f6;border:1px solid #fff"></div>
<div class="t" style="left:563px;top:333px;width:44px;text-align:right;padding-right:2px;letter-spacing:-0.2px">0</div>
<div class="a" style="left:608px;top:328px;width:44px;height:22px;background:#f6f6f6;border:1px solid #fff"></div>
<div class="t" style="left:608px;top:333px;width:44px;text-align:right;padding-right:2px;letter-spacing:-0.2px">0</div>
<div class="a" style="left:653px;top:328px;width:44px;height:22px;background:#f6f6f6;border:1px solid #fff"></div>
<div class="t" style="left:653px;top:333px;width:44px;text-align:right;padding-right:2px;letter-spacing:-0.2px">0</div>
<div class="a" style="left:698px;top:328px;width:44px;height:22px;background:#f6f6f6;border:1px solid #fff"></div>
<div class="t" style="left:698px;top:333px;width:44px;text-align:right;padding-right:2px;letter-spacing:-0.2px">0</div>
<div class="a" style="left:743px;top:328px;width:44px;height:22px;background:#f6f6f6;border:1px solid #fff"></div>
<div class="t" style="left:743px;top:333px;width:44px;text-align:right;padding-right:2px;letter-spacing:-0.2px">0</div>
<div class="a" style="left:788px;top:328px;width:44px;height:22px;background:#f6f6f6;border:1px solid #fff"></div>
<div class="t" style="left:788px;top:333px;width:44px;text-align:right;padding-right:2px;letter-spacing:-0.2px">0</div>
<div class="a" style="left:833px;top:328px;width:44px;height:22px;background:#f6f6f6;border:1px solid #fff"></div>
<div class="t" style="left:833px;top:333px;width:44px;text-align:right;padding-right:2px;letter-spacing:-0.2px">0</div>
<div class="a" style="left:878px;top:328px;width:44px;height:22px;background:#f6f6f6;border:1px solid #fff"></div>
<div class="t" style="left:878px;top:333px;width:44px;text-align:right;padding-right:2px;letter-spacing:-0.2px">0</div>
<div class="a" style="left:923px;top:328px;width:44px;height:22px;background:#f6f6f6;border:1px solid #fff"></div>
<div class="t" style="left:923px;top:333px;width:44px;text-align:right;padding-right:2px;letter-spacing:-0.2px">0</div>
<div class="a" style="left:968px;top:328px;width:44px;height:22px;background:#f6f6f6;border:1px solid #fff"></div>
<div class="t" style="left:968px;top:333px;width:44px;text-align:right;padding-right:2px;letter-spacing:-0.2px">0</div>
<div class="a" style="left:1013px;top:328px;width:44px;height:22px;background:#f6f6f6;border:1px solid #fff"></div>
<div class="t" style="left:1013px;top:333px;width:44px;text-align:right;padding-right:2px;letter-spacing:-0.2px">0</div>
<div class="a" style="left:1058px;top:328px;width:8px;height:22px;background:#f6f6f6;border:1px solid #fff"></div>
<div class="a" style="left:11px;top:351px;width:146px;height:22px;background:#80a8da"></div>
<div class="t" style="left:16px;top:356px;font-weight:bold;font-size:11.5px">Break/Lunch</div>
<div class="a" style="left:158px;top:351px;width:44px;height:22px;background:#f6f6f6;border:1px solid #fff"></div>
<div class="t" style="left:158px;top:356px;width:44px;text-align:right;padding-right:2px;letter-spacing:-0.2px">2</div>
<div class="a" style="left:203px;top:351px;width:44px;height:22px;background:#f6f6f6;border:1px solid #fff"></div>
<div class="t" style="left:203px;top:356px;width:44px;text-align:right;padding-right:2px;letter-spacing:-0.2px">0</div>
<div class="a" style="left:248px;top:351px;width:44px;height:22px;background:#f6f6f6;border:1px solid #fff"></div>
<div class="t" style="left:248px;top:356px;width:44px;text-align:right;padding-right:2px;letter-spacing:-0.2px">1</div>
<div class="a" style="left:293px;top:351px;width:44px;height:22px;background:#f6f6f6;border:1px solid #fff"></div>
<div class="t" style="left:293px;top:356px;width:44px;text-align:right;padding-right:2px;letter-spacing:-0.2px">3</div>
<div class="a" style="left:338px;top:351px;width:44px;height:22px;background:#f6f6f6;border:1px solid #fff"></div>
<div class="t" style="left:338px;top:356px;width:44px;text-align:right;padding-right:2px;letter-spacing:-0.2px">3</div>
<div class="a" style="left:383px;top:351px;width:44px;height:22px;background:#f6f6f6;border:1px solid #fff"></div>
<div class="t" style="left:383px;top:356px;width:44px;text-align:right;padding-right:2px;letter-spacing:-0.2px">1</div>
<div class="a" style="left:428px;top:351px;width:44px;height:22px;background:#f6f6f6;border:1px solid #fff"></div>
<div class="t" style="left:428px;top:356px;width:44px;text-align:right;padding-right:2px;letter-spacing:-0.2px">2</div>
<div class="a" style="left:473px;top:351px;width:44px;height:22px;background:#f6f6f6;border:1px solid #fff"></div>
<div class="t" style="left:473px;top:356px;width:44px;text-align:right;padding-right:2px;letter-spacing:-0.2px">0</div>
<div class="a" style="left:518px;top:351px;width:44px;height:22px;background:#f6f6f6;border:1px solid #fff"></div>
<div class="t" style="left:518px;top:356px;width:44px;text-align:right;padding-right:2px;letter-spacing:-0.2px">0</div>
<div class="a" style="left:563px;top:351px;width:44px;height:22px;background:#f6f6f6;border:1px solid #fff"></div>
<div class="t" style="left:563px;top:356px;width:44px;text-align:right;padding-right:2px;letter-spacing:-0.2px">0</div>
<div class="a" style="left:608px;top:351px;width:44px;height:22px;background:#f6f6f6;border:1px solid #fff"></div>
<div class="t" style="left:608px;top:356px;width:44px;text-align:right;padding-right:2px;letter-spacing:-0.2px">0</div>
<div class="a" style="left:653px;top:351px;width:44px;height:22px;background:#f6f6f6;border:1px solid #fff"></div>
<div class="t" style="left:653px;top:356px;width:44px;text-align:right;padding-right:2px;letter-spacing:-0.2px">1</div>
<div class="a" style="left:698px;top:351px;width:44px;height:22px;background:#f6f6f6;border:1px solid #fff"></div>
<div class="t" style="left:698px;top:356px;width:44px;text-align:right;padding-right:2px;letter-spacing:-0.2px">1</div>
<div class="a" style="left:743px;top:351px;width:44px;height:22px;background:#f6f6f6;border:1px solid #fff"></div>
<div class="t" style="left:743px;top:356px;width:44px;text-align:right;padding-right:2px;letter-spacing:-0.2px">4</div>
<div class="a" style="left:788px;top:351px;width:44px;height:22px;background:#f6f6f6;border:1px solid #fff"></div>
<div class="t" style="left:788px;top:356px;width:44px;text-align:right;padding-right:2px;letter-spacing:-0.2px">3</div>
<div class="a" style="left:833px;top:351px;width:44px;height:22px;background:#f6f6f6;border:1px solid #fff"></div>
<div class="t" style="left:833px;top:356px;width:44px;text-align:right;padding-right:2px;letter-spacing:-0.2px">6</div>
<div class="a" style="left:878px;top:351px;width:44px;height:22px;background:#f6f6f6;border:1px solid #fff"></div>
<div class="t" style="left:878px;top:356px;width:44px;text-align:right;padding-right:2px;letter-spacing:-0.2px">4</div>
<div class="a" style="left:923px;top:351px;width:44px;height:22px;background:#f6f6f6;border:1px solid #fff"></div>
<div class="t" style="left:923px;top:356px;width:44px;text-align:right;padding-right:2px;letter-spacing:-0.2px">4</div>
<div class="a" style="left:968px;top:351px;width:44px;height:22px;background:#f6f6f6;border:1px solid #fff"></div>
<div class="t" style="left:968px;top:356px;width:44px;text-align:right;padding-right:2px;letter-spacing:-0.2px">10</div>
<div class="a" style="left:1013px;top:351px;width:44px;height:22px;background:#f6f6f6;border:1px solid #fff"></div>
<div class="t" style="left:1013px;top:356px;width:44px;text-align:right;padding-right:2px;letter-spacing:-0.2px">5</div>
<div class="a" style="left:1058px;top:351px;width:8px;height:22px;background:#f6f6f6;border:1px solid #fff"></div>
<div class="a" style="left:11px;top:374px;width:146px;height:22px;background:#80a8da"></div>
<div class="t" style="left:16px;top:379px;font-weight:bold;font-size:11.5px">Non-call Activity</div>
<div class="a" style="left:158px;top:374px;width:44px;height:22px;background:#f6f6f6;border:1px solid #fff"></div>
<div class="t" style="left:158px;top:379px;width:44px;text-align:right;padding-right:2px;letter-spacing:-0.2px">0</div>
<div class="a" style="left:203px;top:374px;width:44px;height:22px;background:#f6f6f6;border:1px solid #fff"></div>
<div class="t" style="left:203px;top:379px;width:44px;text-align:right;padding-right:2px;letter-spacing:-0.2px">0</div>
<div class="a" style="left:248px;top:374px;width:44px;height:22px;background:#f6f6f6;border:1px solid #fff"></div>
<div class="t" style="left:248px;top:379px;width:44px;text-align:right;padding-right:2px;letter-spacing:-0.2px">0</div>
<div class="a" style="left:293px;top:374px;width:44px;height:22px;background:#f6f6f6;border:1px solid #fff"></div>
<div class="t" style="left:293px;top:379px;width:44px;text-align:right;padding-right:2px;letter-spacing:-0.2px">0</div>
<div class="a" style="left:338px;top:374px;width:44px;height:22px;background:#f6f6f6;border:1px solid #fff"></div>
<div class="t" style="left:338px;top:379px;width:44px;text-align:right;padding-right:2px;letter-spacing:-0.2px">0</div>
<div class="a" style="left:383px;top:374px;width:44px;height:22px;background:#f6f6f6;border:1px solid #fff"></div>
<div class="t" style="left:383px;top:379px;width:44px;text-align:right;padding-right:2px;letter-spacing:-0.2px">0</div>
<div class="a" style="left:428px;top:374px;width:44px;height:22px;background:#f6f6f6;border:1px solid #fff"></div>
<div class="t" style="left:428px;top:379px;width:44px;text-align:right;padding-right:2px;letter-spacing:-0.2px">0</div>
<div class="a" style="left:473px;top:374px;width:44px;height:22px;background:#f6f6f6;border:1px solid #fff"></div>
<div class="t" style="left:473px;top:379px;width:44px;text-align:right;padding-right:2px;letter-spacing:-0.2px">0</div>
<div class="a" style="left:518px;top:374px;width:44px;height:22px;background:#f6f6f6;border:1px solid #fff"></div>
<div class="t" style="left:518px;top:379px;width:44px;text-align:right;padding-right:2px;letter-spacing:-0.2px">0</div>
<div class="a" style="left:563px;top:374px;width:44px;height:22px;background:#f6f6f6;border:1px solid #fff"></div>
<div class="t" style="left:563px;top:379px;width:44px;text-align:right;padding-right:2px;letter-spacing:-0.2px">0</div>
<div class="a" style="left:608px;top:374px;width:44px;height:22px;background:#f6f6f6;border:1px solid #fff"></div>
<div class="t" style="left:608px;top:379px;width:44px;text-align:right;padding-right:2px;letter-spacing:-0.2px">0</div>
<div class="a" style="left:653px;top:374px;width:44px;height:22px;background:#f6f6f6;border:1px solid #fff"></div>
<div class="t" style="left:653px;top:379px;width:44px;text-align:right;padding-right:2px;letter-spacing:-0.2px">0</div>
<div class="a" style="left:698px;top:374px;width:44px;height:22px;background:#f6f6f6;border:1px solid #fff"></div>
<div class="t" style="left:698px;top:379px;width:44px;text-align:right;padding-right:2px;letter-spacing:-0.2px">0</div>
<div class="a" style="left:743px;top:374px;width:44px;height:22px;background:#f6f6f6;border:1px solid #fff"></div>
<div class="t" style="left:743px;top:379px;width:44px;text-align:right;padding-right:2px;letter-spacing:-0.2px">0</div>
<div class="a" style="left:788px;top:374px;width:44px;height:22px;background:#f6f6f6;border:1px solid #fff"></div>
<div class="t" style="left:788px;top:379px;width:44px;text-align:right;padding-right:2px;letter-spacing:-0.2px">0</div>
<div class="a" style="left:833px;top:374px;width:44px;height:22px;background:#f6f6f6;border:1px solid #fff"></div>
<div class="t" style="left:833px;top:379px;width:44px;text-align:right;padding-right:2px;letter-spacing:-0.2px">0</div>
<div class="a" style="left:878px;top:374px;width:44px;height:22px;background:#f6f6f6;border:1px solid #fff"></div>
<div class="t" style="left:878px;top:379px;width:44px;text-align:right;padding-right:2px;letter-spacing:-0.2px">0</div>
<div class="a" style="left:923px;top:374px;width:44px;height:22px;background:#f6f6f6;border:1px solid #fff"></div>
<div class="t" style="left:923px;top:379px;width:44px;text-align:right;padding-right:2px;letter-spacing:-0.2px">0</div>
<div class="a" style="left:968px;top:374px;width:44px;height:22px;background:#f6f6f6;border:1px solid #fff"></div>
<div class="t" style="left:968px;top:379px;width:44px;text-align:right;padding-right:2px;letter-spacing:-0.2px">0</div>
<div class="a" style="left:1013px;top:374px;width:44px;height:22px;background:#f6f6f6;border:1px solid #fff"></div>
<div class="t" style="left:1013px;top:379px;width:44px;text-align:right;padding-right:2px;letter-spacing:-0.2px">0</div>
<div class="a" style="left:1058px;top:374px;width:8px;height:22px;background:#f6f6f6;border:1px solid #fff"></div>
<div class="a" style="left:10px;top:397px;width:148px;height:195px;background:#000;overflow:hidden">
<div class="a" style="left:1px;top:0px;width:147px;height:15px;background:linear-gradient(#5a5a5a 0,#9a9a9a 1.5px,#3a3a3a 3px,#0a0a0a 4.5px,#0a0a0a 9px,#707070 15px)"></div>
<div class="t" style="left:6px;top:2px;color:#fff;font-weight:bold;font-size:11.3px;-webkit-text-stroke:0.3px #fff">Joe, Deadeye</div>
<div class="a" style="left:1px;top:16px;width:147px;height:15px;background:linear-gradient(#5a5a5a 0,#9a9a9a 1.5px,#3a3a3a 3px,#0a0a0a 4.5px,#0a0a0a 9px,#707070 15px)"></div>
<div class="t" style="left:6px;top:18px;color:#fff;font-weight:bold;font-size:11.3px;-webkit-text-stroke:0.3px #fff">Jones, Violet</div>
<div class="a" style="left:1px;top:32px;width:147px;height:15px;background:linear-gradient(#5a5a5a 0,#9a9a9a 1.5px,#3a3a3a 3px,#0a0a0a 4.5px,#0a0a0a 9px,#707070 15px)"></div>
<div class="t" style="left:6px;top:34px;color:#fff;font-weight:bold;font-size:11.3px;-webkit-text-stroke:0.3px #fff">Anderson, Tracey</div>
<div class="a" style="left:1px;top:48px;width:147px;height:15px;background:linear-gradient(#5a5a5a 0,#9a9a9a 1.5px,#3a3a3a 3px,#0a0a0a 4.5px,#0a0a0a 9px,#707070 15px)"></div>
<div class="t" style="left:6px;top:50px;color:#fff;font-weight:bold;font-size:11.3px;-webkit-text-stroke:0.3px #fff">Andrews, Julie</div>
<div class="a" style="left:1px;top:64px;width:147px;height:15px;background:linear-gradient(#5a5a5a 0,#9a9a9a 1.5px,#3a3a3a 3px,#0a0a0a 4.5px,#0a0a0a 9px,#707070 15px)"></div>
<div class="t" style="left:6px;top:66px;color:#fff;font-weight:bold;font-size:11.3px;-webkit-text-stroke:0.3px #fff">Adeys, Deqster</div>
<div class="a" style="left:1px;top:80px;width:147px;height:15px;background:linear-gradient(#5a5a5a 0,#9a9a9a 1.5px,#3a3a3a 3px,#0a0a0a 4.5px,#0a0a0a 9px,#707070 15px)"></div>
<div class="t" style="left:6px;top:82px;color:#fff;font-weight:bold;font-size:11.3px;-webkit-text-stroke:0.3px #fff">Aguirre, Olivia</div>
<div class="a" style="left:1px;top:96px;width:147px;height:15px;background:linear-gradient(#5a5a5a 0,#9a9a9a 1.5px,#3a3a3a 3px,#0a0a0a 4.5px,#0a0a0a 9px,#707070 15px)"></div>
<div class="t" style="left:6px;top:98px;color:#fff;font-weight:bold;font-size:11.3px;-webkit-text-stroke:0.3px #fff">Curie, Marie</div>
<div class="a" style="left:1px;top:112px;width:147px;height:15px;background:linear-gradient(#5a5a5a 0,#9a9a9a 1.5px,#3a3a3a 3px,#0a0a0a 4.5px,#0a0a0a 9px,#707070 15px)"></div>
<div class="t" style="left:6px;top:114px;color:#fff;font-weight:bold;font-size:11.3px;-webkit-text-stroke:0.3px #fff">Anthony, Susan</div>
<div class="a" style="left:1px;top:128px;width:147px;height:15px;background:linear-gradient(#5a5a5a 0,#9a9a9a 1.5px,#3a3a3a 3px,#0a0a0a 4.5px,#0a0a0a 9px,#707070 15px)"></div>
<div class="t" style="left:6px;top:130px;color:#fff;font-weight:bold;font-size:11.3px;-webkit-text-stroke:0.3px #fff">Anderson, Amy Lou</div>
<div class="a" style="left:1px;top:144px;width:147px;height:15px;background:linear-gradient(#5a5a5a 0,#9a9a9a 1.5px,#3a3a3a 3px,#0a0a0a 4.5px,#0a0a0a 9px,#707070 15px)"></div>
<div class="t" style="left:6px;top:146px;color:#fff;font-weight:bold;font-size:11.3px;-webkit-text-stroke:0.3px #fff">Bezanson, Jesse</div>
<div class="a" style="left:1px;top:160px;width:147px;height:15px;background:linear-gradient(#5a5a5a 0,#9a9a9a 1.5px,#3a3a3a 3px,#0a0a0a 4.5px,#0a0a0a 9px,#707070 15px)"></div>
<div class="t" style="left:6px;top:162px;color:#fff;font-weight:bold;font-size:11.3px;-webkit-text-stroke:0.3px #fff">Jordan, Michael</div>
<div class="a" style="left:1px;top:176px;width:147px;height:15px;background:linear-gradient(#5a5a5a 0,#9a9a9a 1.5px,#3a3a3a 3px,#0a0a0a 4.5px,#0a0a0a 9px,#707070 15px)"></div>
<div class="t" style="left:6px;top:178px;color:#fff;font-weight:bold;font-size:11.3px;-webkit-text-stroke:0.3px #fff">X, Navi</div>
<div class="a" style="left:1px;top:192px;width:147px;height:15px;background:linear-gradient(#5a5a5a 0,#9a9a9a 1.5px,#3a3a3a 3px,#0a0a0a 4.5px,#0a0a0a 9px,#707070 15px)"></div>
</div>
<div class="a" style="left:158px;top:397px;width:909px;height:195px;background:#f4f4f4;overflow:hidden">
<div class="a" style="left:0;top:0;width:909px;height:195px;background:repeating-linear-gradient(180deg,#fff 0,#fff 1px,transparent 1px,transparent 14px,#fff 14px,#fff 15px,transparent 15px,transparent 16px)"></div>
<div class="a" style="left:0;top:0;width:909px;height:195px;background:repeating-linear-gradient(90deg,#fff 0,#fff 1px,transparent 1px,transparent 43px,#fff 43px,#fff 44px,#bababa 44px,#bababa 45px)"></div>
<div class="a" style="left:0px;top:32px;width:225px;height:15px;background:linear-gradient(#b8c6ff 0,#b8c6ff 2px,#3c5cff 4.5px,#4464fc 7px,#8ea2f8 13.5px,#b4c2ff 14px,#b4c2ff 15px)"></div>
<div class="a" style="left:44px;top:32px;width:1px;height:15px;background:rgba(0,10,140,0.45)"></div>
<div class="a" style="left:89px;top:32px;width:1px;height:15px;background:rgba(0,10,140,0.45)"></div>
<div class="a" style="left:134px;top:32px;width:1px;height:15px;background:rgba(0,10,140,0.45)"></div>
<div class="a" style="left:179px;top:32px;width:1px;height:15px;background:rgba(0,10,140,0.45)"></div>
<div class="a" style="left:224px;top:32px;width:1px;height:15px;background:rgba(0,10,140,0.45)"></div>
<div class="a" style="left:225px;top:32px;width:45px;height:15px;background:linear-gradient(#fcd6c0 0,#fcd6c0 2px,#ff9a62 4.5px,#ffa06c 7px,#fcc0a0 13.5px,#ffd0b4 14px,#ffd0b4 15px)"></div>
<div class="a" style="left:269px;top:32px;width:1px;height:15px;background:rgba(120,40,0,0.25)"></div>
<div class="a" style="left:270px;top:32px;width:360px;height:15px;background:linear-gradient(#b8c6ff 0,#b8c6ff 2px,#3c5cff 4.5px,#4464fc 7px,#8ea2f8 13.5px,#b4c2ff 14px,#b4c2ff 15px)"></div>
<div class="a" style="left:314px;top:32px;width:1px;height:15px;background:rgba(0,10,140,0.45)"></div>
<div class="a" style="left:359px;top:32px;width:1px;height:15px;background:rgba(0,10,140,0.45)"></div>
<div class="a" style="left:404px;top:32px;width:1px;height:15px;background:rgba(0,10,140,0.45)"></div>
<div class="a" style="left:449px;top:32px;width:1px;height:15px;background:rgba(0,10,140,0.45)"></div>
<div class="a" style="left:494px;top:32px;width:1px;height:15px;background:rgba(0,10,140,0.45)"></div>
<div class="a" style="left:539px;top:32px;width:1px;height:15px;background:rgba(0,10,140,0.45)"></div>
<div class="a" style="left:584px;top:32px;width:1px;height:15px;background:rgba(0,10,140,0.45)"></div>
<div class="a" style="left:629px;top:32px;width:1px;height:15px;background:rgba(0,10,140,0.45)"></div>
<div class="a" style="left:630px;top:32px;width:180px;height:15px;background:linear-gradient(#ace0ac 0,#ace0ac 2px,#38ae38 4.5px,#46b446 7px,#86cc86 13.5px,#98dc98 14px,#98dc98 15px)"></div>
<div class="a" style="left:674px;top:32px;width:1px;height:15px;background:rgba(0,60,0,0.35)"></div>
<div class="a" style="left:719px;top:32px;width:1px;height:15px;background:rgba(0,60,0,0.35)"></div>
<div class="a" style="left:764px;top:32px;width:1px;height:15px;background:rgba(0,60,0,0.35)"></div>
<div class="a" style="left:809px;top:32px;width:1px;height:15px;background:rgba(0,60,0,0.35)"></div>
<div class="a" style="left:810px;top:32px;width:99px;height:15px;background:linear-gradient(#b8c6ff 0,#b8c6ff 2px,#3c5cff 4.5px,#4464fc 7px,#8ea2f8 13.5px,#b4c2ff 14px,#b4c2ff 15px)"></div>
<div class="a" style="left:854px;top:32px;width:1px;height:15px;background:rgba(0,10,140,0.45)"></div>
<div class="a" style="left:899px;top:32px;width:1px;height:15px;background:rgba(0,10,140,0.45)"></div>
<div class="a" style="left:0px;top:48px;width:270px;height:15px;background:linear-gradient(#b8c6ff 0,#b8c6ff 2px,#3c5cff 4.5px,#4464fc 7px,#8ea2f8 13.5px,#b4c2ff 14px,#b4c2ff 15px)"></div>
<div class="a" style="left:44px;top:48px;width:1px;height:15px;background:rgba(0,10,140,0.45)"></div>
<div class="a" style="left:89px;top:48px;width:1px;height:15px;background:rgba(0,10,140,0.45)"></div>
<div class="a" style="left:134px;top:48px;width:1px;height:15px;background:rgba(0,10,140,0.45)"></div>
<div class="a" style="left:179px;top:48px;width:1px;height:15px;background:rgba(0,10,140,0.45)"></div>
<div class="a" style="left:224px;top:48px;width:1px;height:15px;background:rgba(0,10,140,0.45)"></div>
<div class="a" style="left:269px;top:48px;width:1px;height:15px;background:rgba(0,10,140,0.45)"></div>
<div class="a" style="left:270px;top:48px;width:45px;height:15px;background:linear-gradient(#fcd6c0 0,#fcd6c0 2px,#ff9a62 4.5px,#ffa06c 7px,#fcc0a0 13.5px,#ffd0b4 14px,#ffd0b4 15px)"></div>
<div class="a" style="left:314px;top:48px;width:1px;height:15px;background:rgba(120,40,0,0.25)"></div>
<div class="a" style="left:315px;top:48px;width:360px;height:15px;background:linear-gradient(#b8c6ff 0,#b8c6ff 2px,#3c5cff 4.5px,#4464fc 7px,#8ea2f8 13.5px,#b4c2ff 14px,#b4c2ff 15px)"></div>
<div class="a" style="left:359px;top:48px;width:1px;height:15px;background:rgba(0,10,140,0.45)"></div>
<div class="a" style="left:404px;top:48px;width:1px;height:15px;background:rgba(0,10,140,0.45)"></div>
<div class="a" style="left:449px;top:48px;width:1px;height:15px;background:rgba(0,10,140,0.45)"></div>
<div class="a" style="left:494px;top:48px;width:1px;height:15px;background:rgba(0,10,140,0.45)"></div>
<div class="a" style="left:539px;top:48px;width:1px;height:15px;background:rgba(0,10,140,0.45)"></div>
<div class="a" style="left:584px;top:48px;width:1px;height:15px;background:rgba(0,10,140,0.45)"></div>
<div class="a" style="left:629px;top:48px;width:1px;height:15px;background:rgba(0,10,140,0.45)"></div>
<div class="a" style="left:674px;top:48px;width:1px;height:15px;background:rgba(0,10,140,0.45)"></div>
<div class="a" style="left:675px;top:48px;width:180px;height:15px;background:linear-gradient(#ace0ac 0,#ace0ac 2px,#38ae38 4.5px,#46b446 7px,#86cc86 13.5px,#98dc98 14px,#98dc98 15px)"></div>
<div class="a" style="left:719px;top:48px;width:1px;height:15px;background:rgba(0,60,0,0.35)"></div>
<div class="a" style="left:764px;top:48px;width:1px;height:15px;background:rgba(0,60,0,0.35)"></div>
<div class="a" style="left:809px;top:48px;width:1px;height:15px;background:rgba(0,60,0,0.35)"></div>
<div class="a" style="left:854px;top:48px;width:1px;height:15px;background:rgba(0,60,0,0.35)"></div>
<div class="a" style="left:855px;top:48px;width:54px;height:15px;background:linear-gradient(#b8c6ff 0,#b8c6ff 2px,#3c5cff 4.5px,#4464fc 7px,#8ea2f8 13.5px,#b4c2ff 14px,#b4c2ff 15px)"></div>
<div class="a" style="left:899px;top:48px;width:1px;height:15px;background:rgba(0,10,140,0.45)"></div>
<div class="a" style="left:0px;top:64px;width:585px;height:15px;background:linear-gradient(#b8c6ff 0,#b8c6ff 2px,#3c5cff 4.5px,#4464fc 7px,#8ea2f8 13.5px,#b4c2ff 14px,#b4c2ff 15px)"></div>
<div class="a" style="left:44px;top:64px;width:1px;height:15px;background:rgba(0,10,140,0.45)"></div>
<div class="a" style="left:89px;top:64px;width:1px;height:15px;background:rgba(0,10,140,0.45)"></div>
<div class="a" style="left:134px;top:64px;width:1px;height:15px;background:rgba(0,10,140,0.45)"></div>
<div class="a" style="left:179px;top:64px;width:1px;height:15px;background:rgba(0,10,140,0.45)"></div>
<div class="a" style="left:224px;top:64px;width:1px;height:15px;background:rgba(0,10,140,0.45)"></div>
<div class="a" style="left:269px;top:64px;width:1px;height:15px;background:rgba(0,10,140,0.45)"></div>
<div class="a" style="left:314px;top:64px;width:1px;height:15px;background:rgba(0,10,140,0.45)"></div>
<div class="a" style="left:359px;top:64px;width:1px;height:15px;background:rgba(0,10,140,0.45)"></div>
<div class="a" style="left:404px;top:64px;width:1px;height:15px;background:rgba(0,10,140,0.45)"></div>
<div class="a" style="left:449px;top:64px;width:1px;height:15px;background:rgba(0,10,140,0.45)"></div>
<div class="a" style="left:494px;top:64px;width:1px;height:15px;background:rgba(0,10,140,0.45)"></div>
<div class="a" style="left:539px;top:64px;width:1px;height:15px;background:rgba(0,10,140,0.45)"></div>
<div class="a" style="left:584px;top:64px;width:1px;height:15px;background:rgba(0,10,140,0.45)"></div>
<div class="a" style="left:585px;top:64px;width:45px;height:15px;background:linear-gradient(#fcd6c0 0,#fcd6c0 2px,#ff9a62 4.5px,#ffa06c 7px,#fcc0a0 13.5px,#ffd0b4 14px,#ffd0b4 15px)"></div>
<div class="a" style="left:629px;top:64px;width:1px;height:15px;background:rgba(120,40,0,0.25)"></div>
<div class="a" style="left:630px;top:64px;width:180px;height:15px;background:linear-gradient(#b8c6ff 0,#b8c6ff 2px,#3c5cff 4.5px,#4464fc 7px,#8ea2f8 13.5px,#b4c2ff 14px,#b4c2ff 15px)"></div>
<div class="a" style="left:674px;top:64px;width:1px;height:15px;background:rgba(0,10,140,0.45)"></div>
<div class="a" style="left:719px;top:64px;width:1px;height:15px;background:rgba(0,10,140,0.45)"></div>
<div class="a" style="left:764px;top:64px;width:1px;height:15px;background:rgba(0,10,140,0.45)"></div>
<div class="a" style="left:809px;top:64px;width:1px;height:15px;background:rgba(0,10,140,0.45)"></div>
<div class="a" style="left:810px;top:64px;width:99px;height:15px;background:linear-gradient(#ace0ac 0,#ace0ac 2px,#38ae38 4.5px,#46b446 7px,#86cc86 13.5px,#98dc98 14px,#98dc98 15px)"></div>
<div class="a" style="left:854px;top:64px;width:1px;height:15px;background:rgba(0,60,0,0.35)"></div>
<div class="a" style="left:899px;top:64px;width:1px;height:15px;background:rgba(0,60,0,0.35)"></div>
<div class="a" style="left:181px;top:80px;width:494px;height:15px;background:linear-gradient(#b8c6ff 0,#b8c6ff 2px,#3c5cff 4.5px,#4464fc 7px,#8ea2f8 13.5px,#b4c2ff 14px,#b4c2ff 15px)"></div>
<div class="a" style="left:224px;top:80px;width:1px;height:15px;background:rgba(0,10,140,0.45)"></div>
<div class="a" style="left:269px;top:80px;width:1px;height:15px;background:rgba(0,10,140,0.45)"></div>
<div class="a" style="left:314px;top:80px;width:1px;height:15px;background:rgba(0,10,140,0.45)"></div>
<div class="a" style="left:359px;top:80px;width:1px;height:15px;background:rgba(0,10,140,0.45)"></div>
<div class="a" style="left:404px;top:80px;width:1px;height:15px;background:rgba(0,10,140,0.45)"></div>
<div class="a" style="left:449px;top:80px;width:1px;height:15px;background:rgba(0,10,140,0.45)"></div>
<div class="a" style="left:494px;top:80px;width:1px;height:15px;background:rgba(0,10,140,0.45)"></div>
<div class="a" style="left:539px;top:80px;width:1px;height:15px;background:rgba(0,10,140,0.45)"></div>
<div class="a" style="left:584px;top:80px;width:1px;height:15px;background:rgba(0,10,140,0.45)"></div>
<div class="a" style="left:629px;top:80px;width:1px;height:15px;background:rgba(0,10,140,0.45)"></div>
<div class="a" style="left:674px;top:80px;width:1px;height:15px;background:rgba(0,10,140,0.45)"></div>
<div class="a" style="left:675px;top:80px;width:45px;height:15px;background:linear-gradient(#fcd6c0 0,#fcd6c0 2px,#ff9a62 4.5px,#ffa06c 7px,#fcc0a0 13.5px,#ffd0b4 14px,#ffd0b4 15px)"></div>
<div class="a" style="left:719px;top:80px;width:1px;height:15px;background:rgba(120,40,0,0.25)"></div>
<div class="a" style="left:720px;top:80px;width:189px;height:15px;background:linear-gradient(#b8c6ff 0,#b8c6ff 2px,#3c5cff 4.5px,#4464fc 7px,#8ea2f8 13.5px,#b4c2ff 14px,#b4c2ff 15px)"></div>
<div class="a" style="left:764px;top:80px;width:1px;height:15px;background:rgba(0,10,140,0.45)"></div>
<div class="a" style="left:809px;top:80px;width:1px;height:15px;background:rgba(0,10,140,0.45)"></div>
<div class="a" style="left:854px;top:80px;width:1px;height:15px;background:rgba(0,10,140,0.45)"></div>
<div class="a" style="left:899px;top:80px;width:1px;height:15px;background:rgba(0,10,140,0.45)"></div>
<div class="a" style="left:541px;top:96px;width:269px;height:15px;background:linear-gradient(#b8c6ff 0,#b8c6ff 2px,#3c5cff 4.5px,#4464fc 7px,#8ea2f8 13.5px,#b4c2ff 14px,#b4c2ff 15px)"></div>
<div class="a" style="left:584px;top:96px;width:1px;height:15px;background:rgba(0,10,140,0.45)"></div>
<div class="a" style="left:629px;top:96px;width:1px;height:15px;background:rgba(0,10,140,0.45)"></div>
<div class="a" style="left:674px;top:96px;width:1px;height:15px;background:rgba(0,10,140,0.45)"></div>
<div class="a" style="left:719px;top:96px;width:1px;height:15px;background:rgba(0,10,140,0.45)"></div>
<div class="a" style="left:764px;top:96px;width:1px;height:15px;background:rgba(0,10,140,0.45)"></div>
<div class="a" style="left:809px;top:96px;width:1px;height:15px;background:rgba(0,10,140,0.45)"></div>
<div class="a" style="left:810px;top:96px;width:45px;height:15px;background:linear-gradient(#fcd6c0 0,#fcd6c0 2px,#ff9a62 4.5px,#ffa06c 7px,#fcc0a0 13.5px,#ffd0b4 14px,#ffd0b4 15px)"></div>
<div class="a" style="left:854px;top:96px;width:1px;height:15px;background:rgba(120,40,0,0.25)"></div>
<div class="a" style="left:855px;top:96px;width:54px;height:15px;background:linear-gradient(#b8c6ff 0,#b8c6ff 2px,#3c5cff 4.5px,#4464fc 7px,#8ea2f8 13.5px,#b4c2ff 14px,#b4c2ff 15px)"></div>
<div class="a" style="left:899px;top:96px;width:1px;height:15px;background:rgba(0,10,140,0.45)"></div>
<div class="a" style="left:541px;top:112px;width:269px;height:15px;background:linear-gradient(#b8c6ff 0,#b8c6ff 2px,#3c5cff 4.5px,#4464fc 7px,#8ea2f8 13.5px,#b4c2ff 14px,#b4c2ff 15px)"></div>
<div class="a" style="left:584px;top:112px;width:1px;height:15px;background:rgba(0,10,140,0.45)"></div>
<div class="a" style="left:629px;top:112px;width:1px;height:15px;background:rgba(0,10,140,0.45)"></div>
<div class="a" style="left:674px;top:112px;width:1px;height:15px;background:rgba(0,10,140,0.45)"></div>
<div class="a" style="left:719px;top:112px;width:1px;height:15px;background:rgba(0,10,140,0.45)"></div>
<div class="a" style="left:764px;top:112px;width:1px;height:15px;background:rgba(0,10,140,0.45)"></div>
<div class="a" style="left:809px;top:112px;width:1px;height:15px;background:rgba(0,10,140,0.45)"></div>
<div class="a" style="left:810px;top:112px;width:45px;height:15px;background:linear-gradient(#fcd6c0 0,#fcd6c0 2px,#ff9a62 4.5px,#ffa06c 7px,#fcc0a0 13.5px,#ffd0b4 14px,#ffd0b4 15px)"></div>
<div class="a" style="left:854px;top:112px;width:1px;height:15px;background:rgba(120,40,0,0.25)"></div>
<div class="a" style="left:855px;top:112px;width:54px;height:15px;background:linear-gradient(#b8c6ff 0,#b8c6ff 2px,#3c5cff 4.5px,#4464fc 7px,#8ea2f8 13.5px,#b4c2ff 14px,#b4c2ff 15px)"></div>
<div class="a" style="left:899px;top:112px;width:1px;height:15px;background:rgba(0,10,140,0.45)"></div>
<div class="a" style="left:541px;top:128px;width:368px;height:15px;background:linear-gradient(#b8c6ff 0,#b8c6ff 2px,#3c5cff 4.5px,#4464fc 7px,#8ea2f8 13.5px,#b4c2ff 14px,#b4c2ff 15px)"></div>
<div class="a" style="left:584px;top:128px;width:1px;height:15px;background:rgba(0,10,140,0.45)"></div>
<div class="a" style="left:629px;top:128px;width:1px;height:15px;background:rgba(0,10,140,0.45)"></div>
<div class="a" style="left:674px;top:128px;width:1px;height:15px;background:rgba(0,10,140,0.45)"></div>
<div class="a" style="left:719px;top:128px;width:1px;height:15px;background:rgba(0,10,140,0.45)"></div>
<div class="a" style="left:764px;top:128px;width:1px;height:15px;background:rgba(0,10,140,0.45)"></div>
<div class="a" style="left:809px;top:128px;width:1px;height:15px;background:rgba(0,10,140,0.45)"></div>
<div class="a" style="left:854px;top:128px;width:1px;height:15px;background:rgba(0,10,140,0.45)"></div>
<div class="a" style="left:899px;top:128px;width:1px;height:15px;background:rgba(0,10,140,0.45)"></div>
<div class="a" style="left:901px;top:144px;width:8px;height:15px;background:linear-gradient(#b8c6ff 0,#b8c6ff 2px,#3c5cff 4.5px,#4464fc 7px,#8ea2f8 13.5px,#b4c2ff 14px,#b4c2ff 15px)"></div>
<div class="a" style="left:0;top:15px;width:909px;height:1px;background:#202020"></div>
<div class="a" style="left:0;top:31px;width:909px;height:1px;background:#202020"></div>
<div class="a" style="left:0;top:47px;width:909px;height:1px;background:#202020"></div>
<div class="a" style="left:0;top:63px;width:909px;height:1px;background:#202020"></div>
<div class="a" style="left:0;top:79px;width:909px;height:1px;background:#202020"></div>
<div class="a" style="left:0;top:95px;width:909px;height:1px;background:#202020"></div>
<div class="a" style="left:0;top:111px;width:909px;height:1px;background:#202020"></div>
<div class="a" style="left:0;top:127px;width:909px;height:1px;background:#202020"></div>
<div class="a" style="left:0;top:143px;width:909px;height:1px;background:#202020"></div>
<div class="a" style="left:0;top:159px;width:909px;height:1px;background:#202020"></div>
<div class="a" style="left:0;top:175px;width:909px;height:1px;background:#202020"></div>
<div class="a" style="left:0;top:191px;width:909px;height:1px;background:#202020"></div>
<div class="a" style="left:0;top:207px;width:909px;height:1px;background:#202020"></div>
</div>
<div class="a" style="left:1067px;top:397px;width:17px;height:195px;background:#f0f0f0"></div>
<div class="a" style="left:1069px;top:414px;width:13px;height:109px;background:#c0c0c0"></div>
<div class="a" style="left:1072px;top:404px;width:0;height:0;border-left:4px solid transparent;border-right:4px solid transparent;border-bottom:4px solid #a0a0a0"></div>
<div class="a" style="left:1072px;top:581px;width:0;height:0;border-left:4px solid transparent;border-right:4px solid transparent;border-top:4px solid #505050"></div>
<div class="a" style="left:158px;top:592px;width:909px;height:17px;background:#f0f0f0"></div>
<div class="a" style="left:594px;top:594px;width:92px;height:13px;background:#c0c0c0"></div>
<div class="a" style="left:164px;top:596px;width:0;height:0;border-top:4px solid transparent;border-bottom:4px solid transparent;border-right:4px solid #505050"></div>
<div class="a" style="left:1057px;top:596px;width:0;height:0;border-top:4px solid transparent;border-bottom:4px solid transparent;border-left:4px solid #505050"></div>
<div class="a" style="left:1067px;top:592px;width:17px;height:17px;background:#fff"></div>
<div class="a" style="left:10px;top:614px;width:1074px;height:43px;border:1px solid #7ea6d8;background:#dce6f8"></div>
<div class="button" style="left:21px;top:625px;width:49px;height:21px;line-height:19px">Legend</div>
<div class="button" style="left:964px;top:625px;width:68px;height:21px;line-height:19px">Reoptimize</div>
<div class="button" style="left:1036px;top:625px;width:37px;height:21px;line-height:19px">Save</div>
</body></html>
